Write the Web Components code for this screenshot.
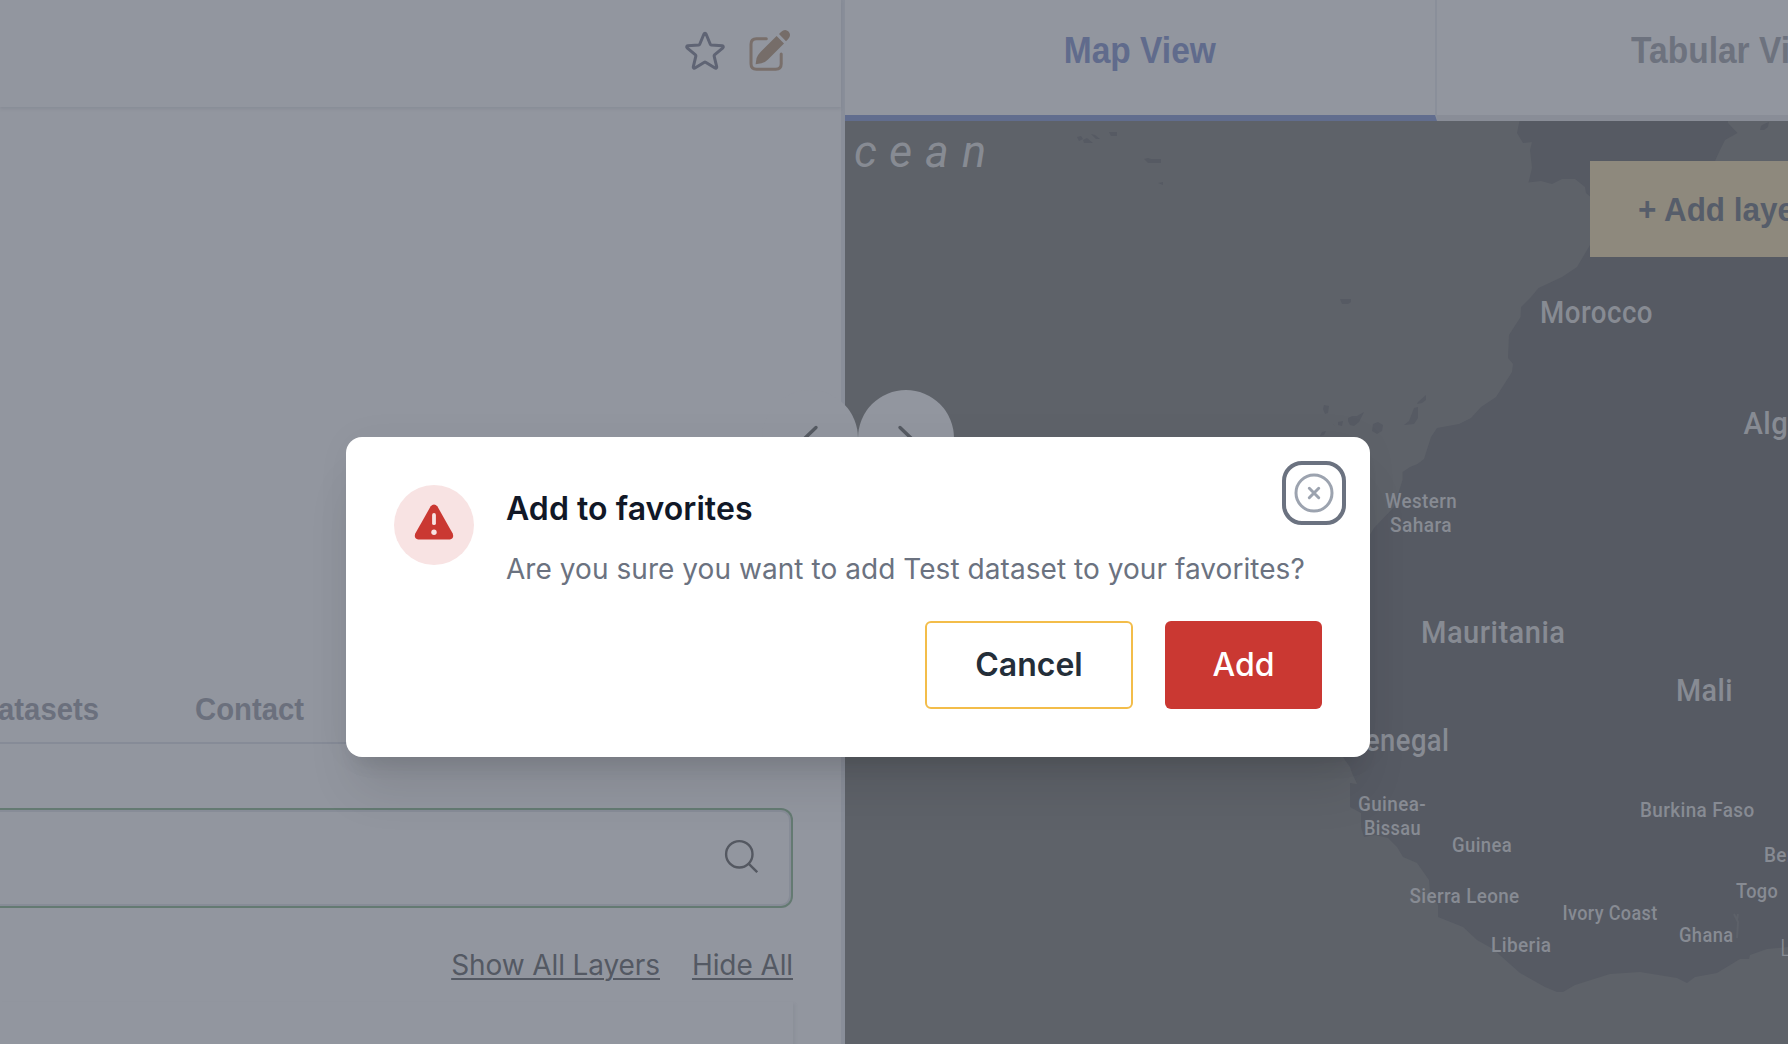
<!DOCTYPE html>
<html lang="en">
<head>
<meta charset="utf-8">
<title>Datasets</title>
<style>
html,body{margin:0;width:1788px;height:1044px;overflow:hidden;background:#92969f;font-family:Inter,"Liberation Sans",sans-serif}
</style>
</head>
<body>
<dataset-page></dataset-page>
<script>
const define = (name, html) => {
  const t = document.createElement('template');
  t.innerHTML = html;
  customElements.define(name, class extends HTMLElement {
    constructor() {
      super();
      this.attachShadow({ mode: 'open' }).append(t.content.cloneNode(true));
    }
  });
};

define('dataset-header', `
<style>
:host{display:flex;box-sizing:border-box;height:107px;flex:none;justify-content:flex-end;align-items:flex-start;gap:16px;padding:27px 48px 0 0;box-shadow:0 2px 3px rgba(70,75,90,.13)}
svg{display:block;width:48px;height:48px}
</style>
<svg viewBox="0 0 24 24" fill="none" stroke="#5f6474" stroke-width="1.5" stroke-linejoin="round"><path d="M11.48 3.499a.562.562 0 011.04 0l2.125 5.111a.563.563 0 00.475.345l5.518.442c.499.04.701.663.321.988l-4.204 3.602a.563.563 0 00-.182.557l1.285 5.385a.562.562 0 01-.84.61l-4.725-2.885a.563.563 0 00-.586 0L6.982 20.54a.562.562 0 01-.84-.61l1.285-5.386a.562.562 0 00-.182-.557l-4.204-3.602a.563.563 0 01.321-.988l5.518-.442a.563.563 0 00.475-.345L11.48 3.5z"/></svg>
<svg viewBox="745 27 48 48"><path d="M766.300 38.800H756.500Q751 38.800 751 44.300V63.800Q751 69.300 756.500 69.300H775.700Q781.200 69.300 781.200 63.800V54" fill="none" stroke="#796f6b" stroke-width="3" stroke-linecap="round"/><path d="M755.600 64.200L756.600 58Q758 54.500 761 51.500L776.600 36L784 43.400L768 59.400Q765.500 62 761.500 63.200ZM779 34.100L781 32Q785 28.200 788.500 31.500Q791.800 35.200 788 39.200L786 41.200Z" fill="#766d69"/></svg>`);

define('section-tabs', `
<style>
:host{display:flex;box-sizing:border-box;height:65px;flex:none;justify-content:flex-start;border-bottom:2px solid #868b97;font:bold 32px/36px "Liberation Sans",sans-serif;color:#6b707d}
span{white-space:nowrap;padding-top:12px}
.a{width:99px;display:flex;justify-content:flex-end;margin-right:96px;transform:scaleX(.915);transform-origin:right}
.b{transform:scaleX(.915);transform-origin:left}
</style><span class="a">atasets</span><span class="b">Contact</span>`);

define('search-box', `
<style>
:host{display:flex;box-sizing:border-box;height:100px;flex:none;margin:0 48px 0 -10px;border:2px solid #647a72;border-left:0;border-radius:0 12px 12px 0;box-shadow:inset 0 0 0 2px #878c97;justify-content:flex-end;align-items:center;padding-right:33px}
svg{width:34px;height:34px;display:block;margin-top:-4px}
</style><svg viewBox="0 0 34 34" fill="none" stroke="#545861" stroke-width="2.400"><circle cx="15.300" cy="15.300" r="13.200"/><path d="M24.600 24.600L33.200 33.200"/></svg>`);

define('layer-links', `
<style>
:host{display:flex;height:40px;justify-content:flex-end;gap:32px;margin:37px 48px 0 0;font:400 28px/40px Inter,sans-serif;letter-spacing:-.1px;color:#545963}
a{text-decoration:underline;text-decoration-thickness:2px;text-underline-offset:3px}
</style><a>Show All Layers</a><a>Hide All</a>`);

define('dataset-panel', `
<style>
:host{display:flex;flex-direction:column;box-sizing:border-box;width:845px;flex:none;height:1044px;border-right:4px solid #898e99}
.body{flex:none;height:572px}
.gap{height:64px;flex:none}
.card{flex:1;margin:17px 48px 0 0;box-shadow:2px 2px 3px rgba(90,96,110,.12)}
</style>
<dataset-header></dataset-header><div class="body"></div><section-tabs></section-tabs><div class="gap"></div><search-box></search-box><layer-links></layer-links><div class="card"></div>`);

define('view-tabs', `
<style>
:host{display:flex;height:121px;width:1184px;flex:none;font:bold 36.500px/40px "Liberation Sans",sans-serif}
div{box-sizing:border-box;width:592px;height:121px;border-bottom:6px solid #898d97;color:#6d727e;text-align:center;padding-top:31px}
span{display:inline-block;transform:scaleX(.918)}
.on{border-bottom-color:#616d8e;border-right:2px solid #8a8f9a;color:#606b8c}
</style><div class="on"><span>Map View</span></div><div><span>Tabular View</span></div>`);

define('map-canvas', `
<style>
:host{display:block;width:943px;height:923px;background:#5e6269}
svg{display:block}
text{font-family:Roboto,sans-serif;font-weight:500;letter-spacing:.4px;fill:#878b93}
.l{font-size:31px;letter-spacing:.5px}.s{font-size:20px}
</style>
<svg width="943" height="923" viewBox="845 121 943 923">
<g fill="#565a63">
<path d="M1519.500 121L1517 133L1523 143L1532 142L1530 150L1532 168L1528.500 182.500L1541 181L1552 184L1562 179H1575L1585 187L1586 193L1594 200H1700L1715 161L1720 150L1725 140L1737.500 133L1728 123V121Z"/>
<path d="M1594 238L1590 245L1577 267L1562 277L1538.500 288L1531 297L1521 307L1520.600 317L1509 335L1508 358L1513 364L1512 372L1496 397L1481 407L1471 418L1459 424L1437 428L1431 437L1424 459L1417.500 464L1410 467L1402.500 472V480L1394 507L1374 528L1355 560L1335 700L1343 757L1350 767L1352 773L1357 784L1350 783V807L1361 813V827L1364 837L1375 835L1388 838L1397 847L1403 857L1417 863L1429 880L1430 893L1438 905V917L1463 927L1477 940L1493 949L1520 973L1545 987L1557 992H1563L1575 985L1610 974L1640 972L1677 978L1687 983L1695 977L1717 973L1740 959H1749L1750 955L1767 949L1788 947V238Z"/>
<path d="M1077 137l4-1 2 3-4 2zM1083 140l4-2 6 5h-9zM1091 134l4 1 5 4-4 0zM1109 132h8v4h-6zM1144 159l4-1 3 1h10v4h-13zM1158 183l5-1v3zM1340 299h11v3l-3 2h-6zM1764 124l5-2-1 5-4 3-4 0 1-4zM1324 405l5 1-1 7-3 1-2-5zM1338 422l5-1-1 5-4-1zM1332 416l9 0 5-4-4 10-4 4-4-1-2-4z" />
<path d="M1348 418l4-2 5 0 7-4-5 10-5 4-4-1-2-4zM1373 424l5-2 5 3-1 6-5 3-5-3zM1418 402l8-7v5l-4 3-5 1zM1414 408l4-1v11l-4 6-10 1 5-4zM1322 432l4-1-2 4-4 1z"/>
</g>
<path d="M1331 411h17v17h-11l-6-6z" fill="#5e6269"/><path d="M1338 422l5-1-1 5-4-1z" fill="#565a63"/>
<path d="M1734 914l4 8-1 16M1738 914l-1 6" stroke="#5d6169" stroke-width="2" fill="none"/>
<text x="854 889 925 962" y="167" style="font-size:45px;font-style:italic;font-weight:400;letter-spacing:0">cean</text>
<text class="l" x="1540" y="322.500" textLength="113" lengthAdjust="spacingAndGlyphs">Morocco</text>
<text class="l" x="1743.500" y="433.500" textLength="96" lengthAdjust="spacingAndGlyphs">Algeria</text>
<text class="l" x="1421" y="643" textLength="144.500" lengthAdjust="spacingAndGlyphs">Mauritania</text>
<text class="l" x="1676" y="700.500" textLength="57" lengthAdjust="spacingAndGlyphs">Mali</text>
<text class="l" x="1365" y="751" textLength="84.500" lengthAdjust="spacingAndGlyphs">enegal</text>
<text class="s" x="1385" y="508" textLength="72" lengthAdjust="spacingAndGlyphs">Western</text>
<text class="s" x="1390" y="532" textLength="62" lengthAdjust="spacingAndGlyphs">Sahara</text>
<text class="s" x="1358" y="810.500" textLength="68" lengthAdjust="spacingAndGlyphs">Guinea-</text>
<text class="s" x="1364" y="834.500" textLength="57" lengthAdjust="spacingAndGlyphs">Bissau</text>
<text class="s" x="1452" y="851.500" textLength="60" lengthAdjust="spacingAndGlyphs">Guinea</text>
<text class="s" x="1640" y="816.500" textLength="114.500" lengthAdjust="spacingAndGlyphs">Burkina Faso</text>
<text class="s" x="1764" y="861.500" textLength="50" lengthAdjust="spacingAndGlyphs">Benin</text>
<text class="s" x="1736" y="898" textLength="42" lengthAdjust="spacingAndGlyphs">Togo</text>
<text class="s" x="1409.500" y="902.500" textLength="110" lengthAdjust="spacingAndGlyphs">Sierra Leone</text>
<text class="s" x="1562.500" y="920" textLength="95" lengthAdjust="spacingAndGlyphs">Ivory Coast</text>
<text class="s" x="1679" y="941.500" textLength="54.500" lengthAdjust="spacingAndGlyphs">Ghana</text>
<text class="s" x="1491" y="951.500" textLength="60.500" lengthAdjust="spacingAndGlyphs">Liberia</text>
<text x="1780" y="955.500" style="font-size:23px;font-weight:300">Lagos</text>
</svg>`);

define('add-layer-button', `
<style>
:host{display:block;position:absolute;left:1590px;top:161px;box-sizing:border-box;width:270px;height:96px;background:#8e897d;color:#565d6a;font:bold 34px/36px "Liberation Sans",sans-serif;padding:30px 0 0 48px;white-space:nowrap}
span{display:inline-block;transform:scaleX(.925);transform-origin:left}
</style><span><slot></slot></span>`);

define('panel-toggle', `
<style>
:host{display:block;position:absolute;top:390px;width:96px;height:96px;border-radius:50%;background:#92969f}
svg{display:block;width:96px;height:96px}
:host([dir=left]){left:762px}:host([dir=right]){left:858px}
:host([dir=left]) svg{transform:scaleX(-1)}
</style><svg viewBox="0 0 96 96" fill="none" stroke="#555a62" stroke-width="3.400" stroke-linecap="round" stroke-linejoin="round"><path d="M42 37.500L54 49L42 60.500"/></svg>`);

define('action-button', `
<style>
:host{display:flex;box-sizing:border-box;height:88px;align-items:center;justify-content:center;border-radius:6px;font:500 32px/40px Inter,sans-serif;width:157px;background:#ca3832;color:#fff}
:host([outline]){width:208px;border:2px solid #f3bd4a;background:#fff;color:#242e39;font-weight:600}
</style><slot></slot>`);

define('close-button', `
<style>
:host{display:block;position:absolute;right:24px;top:24px;box-sizing:border-box;width:64px;height:64px;border:4px solid #6b7280;border-radius:20px}
svg{display:block}
</style><svg width="56" height="56" viewBox="-28 -28 56 56" fill="none" stroke="#9ca3af" stroke-width="3" stroke-linecap="round"><circle r="18"/><path d="M-4.700-4.700L4.700 4.700M4.700-4.700L-4.700 4.700"/></svg>`);

define('confirm-dialog', `
<style>
:host{display:flex;flex-direction:column;position:absolute;left:346px;top:437px;box-sizing:border-box;width:1024px;height:320px;padding:48px;background:#fff;border-radius:16px;box-shadow:0 40px 50px -10px rgba(0,0,0,.1),0 16px 20px -12px rgba(0,0,0,.1),0 0 40px rgba(0,0,0,.03)}
.top{display:flex;gap:32px;height:136px}
.badge{width:80px;height:80px;flex:none;border-radius:50%;background:#f8e3e3}
.badge svg{display:block}
h2{margin:4px 0 0;font:600 32px/40px Inter,sans-serif;letter-spacing:.06px;color:#111827;white-space:nowrap}
p{margin:20px 0 0;font:400 28px/40px Inter,sans-serif;letter-spacing:.055px;color:#6b7280;white-space:nowrap}
.row{display:flex;gap:32px;justify-content:flex-end}
</style>
<div class="top">
<div class="badge"><svg width="80" height="80" viewBox="0 0 80 80"><path d="M36.500 21.600Q40 17.400 43.500 21.600L58.700 48.500Q60.500 53.500 55.800 54.600H24.200Q19.500 53.500 21.300 48.500Z" fill="#ca3832"/><path d="M40 30v8.200" stroke="#f8e3e3" stroke-width="3.800" stroke-linecap="round"/><circle cx="40" cy="47.300" r="2.700" fill="#f8e3e3"/></svg></div>
<div><h2><slot name="title"></slot></h2><p><slot></slot></p></div>
</div>
<div class="row"><action-button outline>Cancel</action-button><action-button>Add</action-button></div>
<close-button></close-button>`);

define('dataset-page', `
<style>
:host{display:flex;position:relative;width:1788px;height:1044px;overflow:hidden}
main{display:flex;flex-direction:column;width:943px;overflow:hidden}
</style>
<dataset-panel></dataset-panel>
<main><view-tabs></view-tabs><map-canvas></map-canvas></main>
<add-layer-button>+ Add layers</add-layer-button>
<panel-toggle dir="left"></panel-toggle><panel-toggle dir="right"></panel-toggle>
<confirm-dialog><span slot="title">Add to favorites</span>Are you sure you want to add Test dataset to your favorites?</confirm-dialog>`);
</script>
</body>
</html>
